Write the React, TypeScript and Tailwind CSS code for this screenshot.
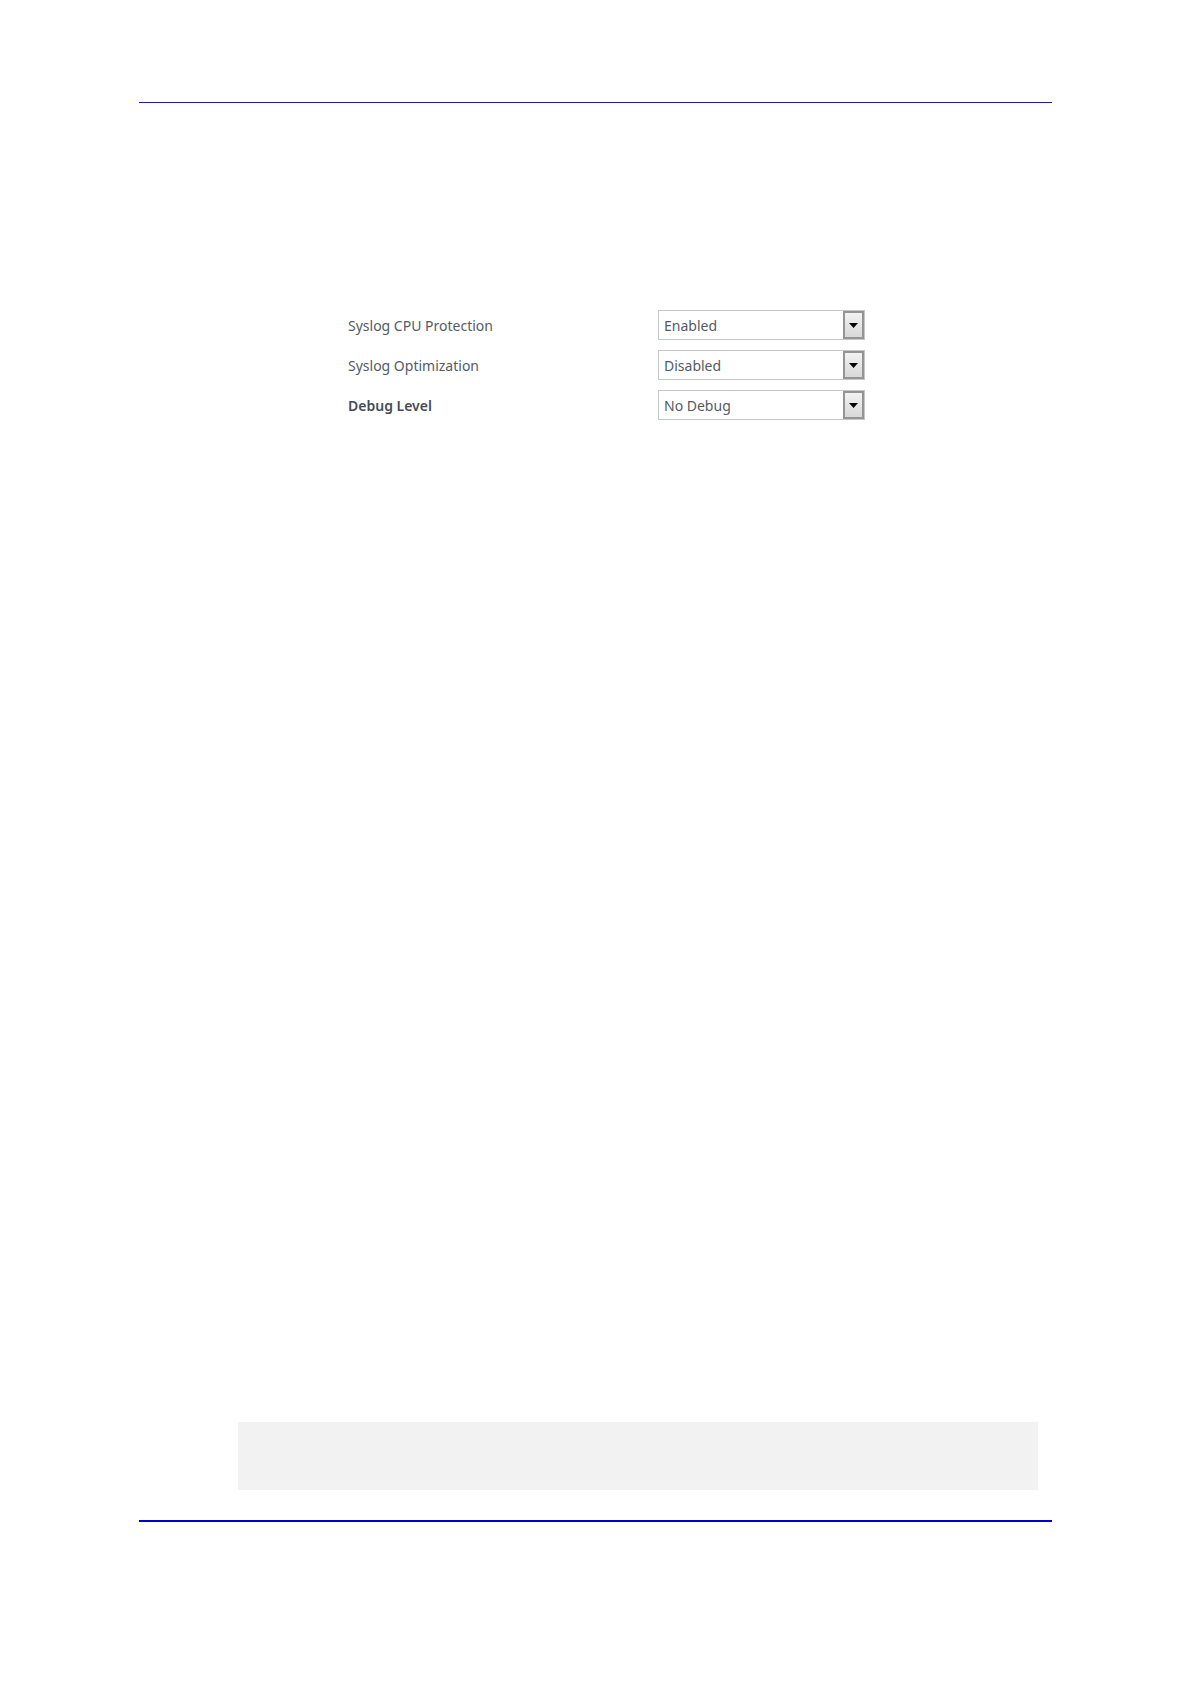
import React, { useState } from "react";
import clsx from "clsx";

interface Setting {
  id: string;
  label: string;
  options: string[];
  strong?: boolean;
}

const settings: Setting[] = [
  {
    id: "cpu-protection",
    label: "Syslog CPU Protection",
    options: ["Enabled", "Disabled"],
  },
  {
    id: "optimization",
    label: "Syslog Optimization",
    options: ["Disabled", "Enabled"],
  },
  {
    id: "debug-level",
    label: "Debug Level",
    options: ["No Debug", "Basic", "Detailed"],
    strong: true,
  },
];

function SettingRow({ id, label, options, strong }: Setting) {
  const [value, setValue] = useState(options[0]);

  return (
    <div className="flex items-center">
      <label
        htmlFor={id}
        className={clsx("w-[310px]", strong && "font-semibold text-[#444b55]")}
      >
        {label}
      </label>
      <div className="relative w-[207px]">
        <select
          id={id}
          value={value}
          onChange={(e) => setValue(e.target.value)}
          className="block h-[30px] w-full appearance-none border border-[#c3c7ca] bg-white pl-[5px] pr-6"
        >
          {options.map((option) => (
            <option key={option}>{option}</option>
          ))}
        </select>
        {/* Drop-down arrow */}
        <div className="pointer-events-none absolute inset-y-px right-px flex w-[21px] items-center justify-center border-2 border-[#949494] bg-linear-to-b from-[#f2f2f2] to-[#d8d8d8]">
          <svg width="9" height="5" viewBox="0 0 9 5" aria-hidden="true">
            <path d="M0 0h9L4.5 5z" fill="#000" />
          </svg>
        </div>
      </div>
    </div>
  );
}

export default function App() {
  return (
    <div className="flex min-h-screen flex-col bg-white px-[139px] pt-[102px] pb-[161px] font-['Noto_Sans',sans-serif] text-[14px] text-[#545b65]">
      <hr className="border-t border-[#1c1c9c]" />

      <form className="mt-[207px] ml-[209px] flex flex-col gap-[10px]">
        {settings.map((setting) => (
          <SettingRow key={setting.id} {...setting} />
        ))}
      </form>

      {/* Note */}
      <div className="mt-auto mr-[14px] mb-[30px] ml-[99px] h-[68px] bg-[#f2f2f2]" />

      <hr className="border-t-2 border-[#0000cc]" />
    </div>
  );
}
